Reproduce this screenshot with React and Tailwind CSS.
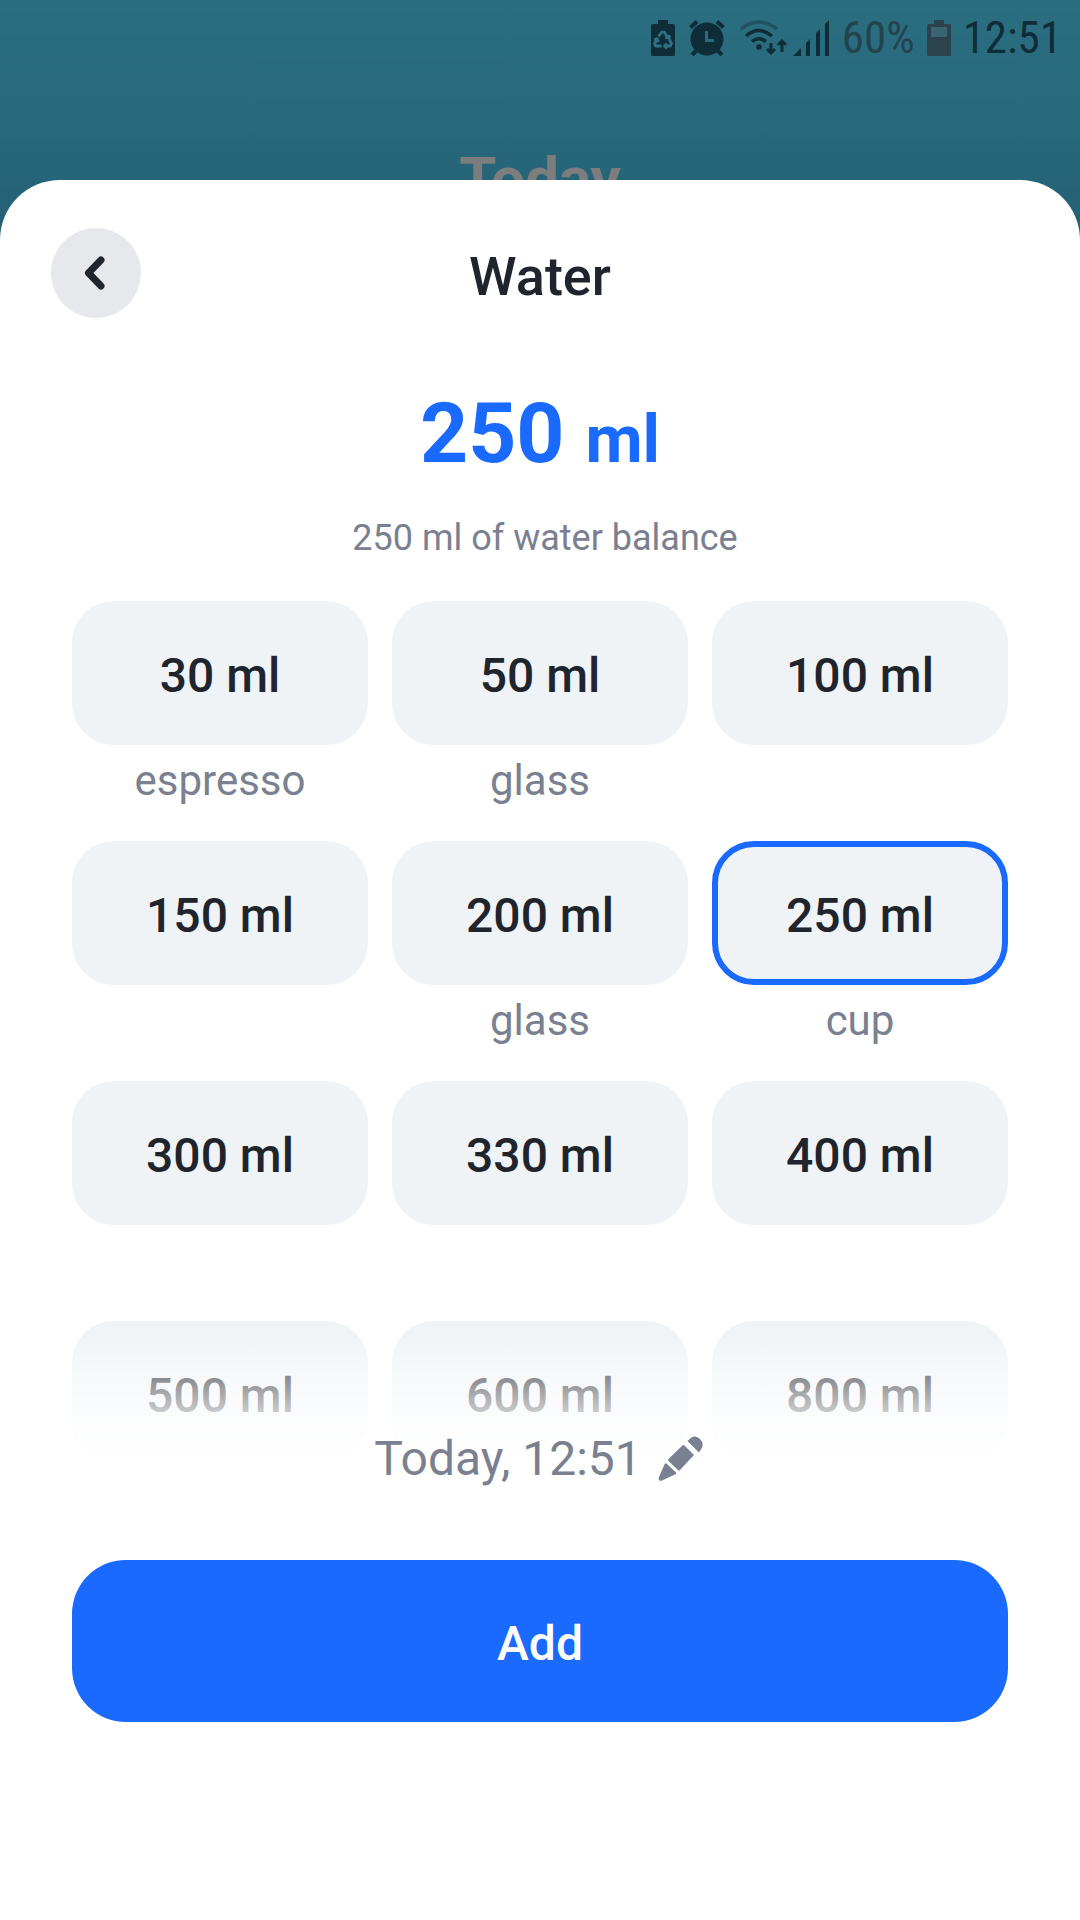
import React, { useState } from 'react';

const portions = [
  { amount: 30, label: 'espresso' },
  { amount: 50, label: 'glass' },
  { amount: 100, label: '' },
  { amount: 150, label: '' },
  { amount: 200, label: 'glass' },
  { amount: 250, label: 'cup' },
  { amount: 300, label: '' },
  { amount: 330, label: '' },
  { amount: 400, label: '' },
  { amount: 500, label: '' },
  { amount: 600, label: '' },
  { amount: 800, label: '' },
];

const StatusBar = () => (
  <div className="flex h-[76px] items-center justify-end pr-[18px] text-[#0f2d38] font-['Roboto_Condensed','Liberation_Sans_Narrow',sans-serif] text-[45px]">
    <svg className="mr-[14px]" width="24" height="36" viewBox="0 0 24 36" fill="currentColor">
      <path d="M7 0h10v4h5.500q1.500 0 1.500 1.500V34.500q0 1.500-1.500 1.500h-21Q0 36 0 34.500v-29Q0 4 1.500 4H7z" />
      <g fill="none" stroke="#2f7083" strokeWidth="2.800" strokeLinejoin="round">
        <path d="M7.500 16.500 10.500 12.200h3L16 16.500M18.200 15v2.500h-4" />
        <path d="M18 19l2.500 4.500-1.300 2.500H14M16 23.500 13.500 26l2.500 2.500" />
        <path d="M10.500 26H4.800L3.500 23.500 6 19.500M3 19.500l3.200-.8 1.300 3.300" />
      </g>
    </svg>
    <svg className="mr-[14px]" width="36" height="36" viewBox="0 0 36 36" fill="none" stroke="currentColor">
      <circle cx="18" cy="19" r="16.500" fill="currentColor" stroke="none" />
      <path d="M1.500 7.500 8 1.500M34.500 7.500 28 1.500M7 31l-4 4M29 31l4 4" strokeWidth="4" />
      <path d="M17.500 11v9.500H25" stroke="#2b6a7c" strokeWidth="3" />
    </svg>
    <svg className="mr-[6px]" width="48" height="36" viewBox="0 0 48 36" fill="none" stroke="currentColor" strokeWidth="3.500">
      <path d="M2 9Q20-5 38 9" opacity="0.4" />
      <path d="M7 16Q20 5 33 16" />
      <path d="M13 21.500Q20 16 27 21.500" />
      <circle cx="20" cy="27" r="2.800" fill="currentColor" stroke="none" />
      <path d="M32 23v10M28 29l4 4 4-4M43 32V21M39 25l4-4 4 4" strokeWidth="3" />
    </svg>
    <svg className="mr-[13px]" width="36" height="36" viewBox="0 0 36 36" fill="currentColor">
      <path d="M0 36 8 28v8zM13 23l4-4v17h-4zM23 13l4-4v27h-4zM32 4l4-4v36h-4z" />
    </svg>
    <span className="mr-[12px] text-[#25434f]">60%</span>
    <svg className="mr-[12px] text-[#2c424c]" width="24" height="36" viewBox="0 0 24 36" fill="currentColor">
      <path d="M7 0h10v4h5.500q1.500 0 1.500 1.500V34.500q0 1.500-1.500 1.500h-21Q0 36 0 34.500v-29Q0 4 1.500 4H7z" />
      <path d="M4 7h16v10H4z" fill="#3c6371" />
    </svg>
    <span>12:51</span>
  </div>
);

const PencilIcon = () => (
  <svg width="48" height="48" viewBox="0 0 48 48" fill="currentColor">
    <path d="M29.500 6 33 2.800Q37.500-.5 42 4t1.500 9.500L41 17.500z" />
    <path d="M26.500 10.500 36 20 22 35Q21 36 20 35L10.500 26Q9.500 25 10.500 24L24.500 10.500Q25.500 9.500 26.500 10.500z" />
    <path d="M6.500 29.500Q7.500 27.500 9 29L17.500 37Q19 38.500 17 39.500L4 45.500Q0 46.500 .8 42.500z" />
  </svg>
);

const App = () => {
  const [selected, setSelected] = useState(250);

  return (
    <div className="flex min-h-screen flex-col bg-[linear-gradient(#2b6e80_0px,#28697c_120px,#255f74_240px)] font-[Roboto,sans-serif] text-[#20242c]">
      <header className="h-[180px]">
        <StatusBar />
        <p className="mt-[68px] text-center text-[60px] leading-[70px] font-bold text-[#7d7d7d]">Today</p>
      </header>

      <main className="relative flex-1 rounded-t-[60px] bg-white pt-12">
        <div className="grid grid-cols-[90px_1fr_90px] px-[51px]">
          <button aria-label="Back" className="flex h-[90px] items-center justify-center rounded-full bg-[#e6e8ec]">
            <svg width="24" height="34" viewBox="0 0 24 34" fill="none" stroke="currentColor" strokeWidth="7" strokeLinecap="round" strokeLinejoin="round">
              <path d="M17 4 4.500 17 17 30" />
            </svg>
          </button>
          <h1 className="mt-4 text-center text-[54px] leading-[66px] font-medium">Water</h1>
        </div>

        <p className="mt-[68px] text-center text-[84px] leading-[96px] font-bold text-[#1a6aff]">
          {selected} <span className="text-[66px] leading-none">ml</span>
        </p>
        <p className="mt-8 pl-2.5 text-center text-[36px] leading-[48px] text-[#7a8090]">{selected} ml of water balance</p>

        <div className="mt-[39px] grid grid-cols-3 gap-x-6 gap-y-8 px-[72px]">
          {portions.map(({ amount, label }) => (
            <div key={amount} className="text-center">
              <button
                onClick={() => setSelected(amount)}
                className={`h-36 w-full rounded-[42px] border-[6px] bg-[#eff3f6] pt-1.5 text-[48px] font-medium ${
                  amount === selected ? 'border-[#1a6aff]' : 'border-[#eff3f6]'
                }`}
              >
                {amount} ml
              </button>
              <p className="mt-2 h-14 text-[42px] leading-[56px] text-[#7a8090]">{label}</p>
            </div>
          ))}
        </div>

        {/* footer fades out the last row of portions */}
        <footer className="relative -mt-52 bg-[linear-gradient(#ffffff00_0px,#ffffffd0_98px,#ffffff_144px)] px-[72px] pt-[110px] pb-12">
          <button className="mx-auto flex items-center gap-4 text-[48px] leading-[56px] text-[#7a8090]">
            Today, 12:51
            <PencilIcon />
          </button>
          <button className="mt-[73px] h-[162px] w-full rounded-[54px] bg-[#1a6aff] pt-1.5 text-[48px] font-medium text-white">
            Add
          </button>
        </footer>
      </main>
    </div>
  );
};

export default App;
